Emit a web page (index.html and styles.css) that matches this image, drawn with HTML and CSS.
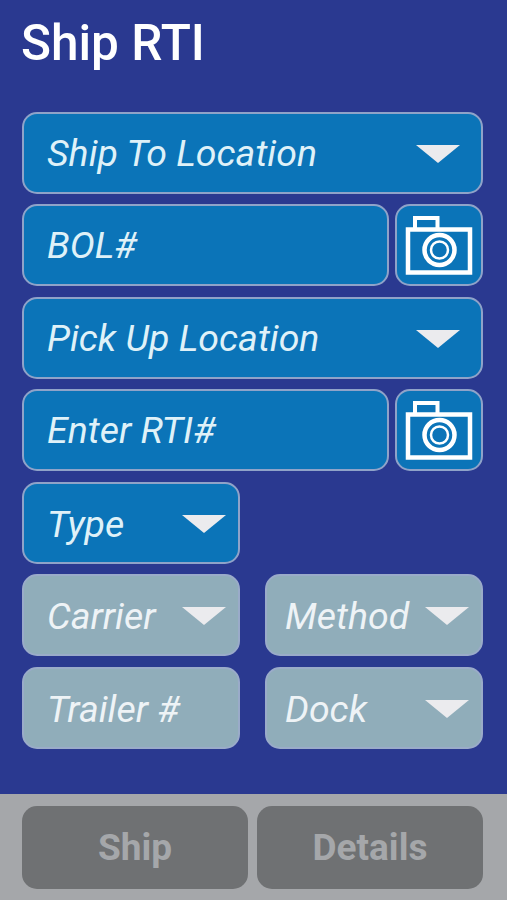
FILE: index.html
```html
<!DOCTYPE html>
<html lang="en">
<head>
<meta charset="utf-8">
<title>Ship RTI</title>
<link rel="stylesheet" href="styles.css">
</head>
<body>
<svg class="defs" width="0" height="0" aria-hidden="true">
  <symbol id="camera" viewBox="0 0 68 60">
    <path d="M3 14.500H65V57.500H3Z" fill="none" stroke="#fff" stroke-width="4.500"/>
    <path d="M10 14.500V3H32.500V14.500" fill="none" stroke="#fff" stroke-width="4"/>
    <circle cx="34.500" cy="35" r="15" fill="none" stroke="#fff" stroke-width="4.500"/>
    <circle cx="34.500" cy="35" r="8.500" fill="none" stroke="#fff" stroke-width="2.500"/>
  </symbol>
  <symbol id="caret" viewBox="0 0 44 18">
    <path d="M0 0H44L22 18Z" fill="#ebebee"/>
  </symbol>
</svg>
<div class="screen">
  <main class="content">
    <h1 class="title">Ship RTI</h1>
    <div class="form">
      <div class="field field-wide"><span>Ship To Location</span><svg class="caret"><use href="#caret"/></svg></div>
      <div class="row">
        <div class="field field-grow"><span>BOL#</span></div>
        <div class="field camera-btn"><svg class="camera"><use href="#camera"/></svg></div>
      </div>
      <div class="field field-wide"><span>Pick Up Location</span><svg class="caret"><use href="#caret"/></svg></div>
      <div class="row">
        <div class="field field-grow"><span>Enter RTI#</span></div>
        <div class="field camera-btn"><svg class="camera"><use href="#camera"/></svg></div>
      </div>
      <div class="pair">
        <div class="field"><span>Type</span><svg class="caret"><use href="#caret"/></svg></div>
      </div>
      <div class="pair">
        <div class="field disabled"><span>Carrier</span><svg class="caret"><use href="#caret"/></svg></div>
        <div class="field disabled method"><span>Method</span><svg class="caret"><use href="#caret"/></svg></div>
      </div>
      <div class="pair pair-last">
        <div class="field disabled"><span>Trailer #</span></div>
        <div class="field disabled method"><span>Dock</span><svg class="caret"><use href="#caret"/></svg></div>
      </div>
    </div>
  </main>
  <footer class="footer">
    <div class="action">Ship</div>
    <div class="action">Details</div>
  </footer>
</div>
</body>
</html>
```

FILE: styles.css
```css
* { box-sizing: border-box; }
html, body { margin: 0; height: 100%; }
body { font-family: Roboto, "Liberation Sans", sans-serif; background: #2a3990; overflow: hidden; }
.defs { position: absolute; }
.screen { height: 900px; display: flex; flex-direction: column; }
.content { flex: 1; padding: 16px 24px 0 22px; }
.title { margin: 0 0 0 -1px; color: #fff; font-size: 49.500px; line-height: 54px; font-weight: 500; height: 95.700px; }
.form { display: flex; flex-direction: column; gap: 10.500px; }
.row { display: flex; gap: 6px; }
.pair { display: grid; grid-template-columns: 217.500px 218px; column-gap: 25.500px; }
.pair-last .field { height: 82.500px; }
.field {
  height: 82px;
  display: flex;
  align-items: center;
  justify-content: space-between;
  padding: 0 21px 0 23px;
  background: #0b74b8;
  border: 2px solid #8fa3c9;
  border-radius: 15px;
  color: #dff1f8;
  font-size: 37.500px;
  font-weight: 400;
  font-style: italic;
  white-space: nowrap;
}
.field .caret { position: relative; top: 1px; }
.field-grow { flex: 1; }
.camera-btn { flex: 0 0 88px; padding: 0; justify-content: center; }
.camera { width: 68px; height: 60px; }
.caret { width: 44px; height: 18px; flex: none; }
.pair .field { padding-right: 12px; }
.pair span { position: relative; top: 1px; }
.disabled { background: #90adba; border-color: #9aabc9; color: #eef3f6; }
.method { padding-left: 18px; }
.footer {
  height: 106px;
  flex: none;
  background: #a5a7aa;
  padding: 12px 24px 11px 22px;
  display: grid;
  grid-template-columns: 226px 226px;
  column-gap: 9px;
}
.action {
  display: flex;
  align-items: center;
  justify-content: center;
  background: #6f7173;
  border-radius: 15px;
  color: #a5a7aa;
  font-size: 37px;
  font-weight: 700;
}
```
